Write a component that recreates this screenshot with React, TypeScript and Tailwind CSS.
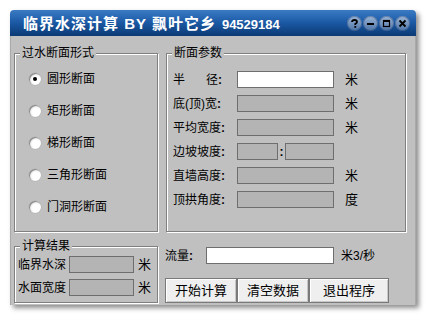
import React from 'react';

const etched = 'border border-[#808080] shadow-[1px_1px_0_#ffffff,inset_1px_1px_0_#ffffff]';
const field = 'h-[17px] border border-[#6e6e6e]';

function Legend({ text }: { text: string }) {
  return (
    <div className="-mt-[8px] ml-[5px] w-fit bg-[#c0c0c0] px-[2px] text-[12px] leading-[14px]">{text}</div>
  );
}

function Radio({ label, checked }: { label: string; checked?: boolean }) {
  return (
    <div className="flex h-[32px] items-center">
      <div className="ml-[14px] flex h-[12px] w-[12px] items-center justify-center rounded-full bg-[radial-gradient(circle_at_60%_60%,#ffffff_40%,#e4e4e4_62%,#9a9a9a_100%)] shadow-[inset_1px_1px_0_#8c8c8c,0_0_0_0.5px_#b0b0b0]">
        {checked && <div className="h-[4px] w-[4px] rounded-full bg-black" />}
      </div>
      <span className="ml-[6px] text-[12px] leading-none">{label}</span>
    </div>
  );
}

function ParamRow({ label, unit, white }: { label: React.ReactNode; unit?: string; white?: boolean }) {
  return (
    <div className="flex h-[17px] items-center">
      <div className="w-[64px] text-[12px] leading-none">{label}</div>
      <div className={`${field} w-[97px] ${white ? 'bg-white' : 'bg-[#b4b4b4]'}`} />
      {unit && <span className="ml-[11px] text-[13px] leading-none">{unit}</span>}
    </div>
  );
}

function TitleButton({ children }: { children: React.ReactNode }) {
  return (
    <div className="flex h-[15px] w-[15px] items-center justify-center rounded-full bg-gradient-to-b from-[#9cb6d6] to-[#4b73a6] shadow-[inset_0_0_0_1px_rgba(20,50,100,0.35)]">
      <svg width="9" height="9" viewBox="0 0 9 9">{children}</svg>
    </div>
  );
}

export default function App() {
  return (
    <div className="min-h-screen bg-white pl-[10px] pt-[10px] font-['Liberation_Sans','Noto_Sans_CJK_SC',sans-serif] text-black">
      <div className="w-[406px] rounded-t-[4px] shadow-[3px_3px_5px_rgba(0,0,0,0.45)]">
        {/* title bar */}
        <div className="flex h-[26px] items-center rounded-t-[4px] bg-gradient-to-b from-[#3a7bc4] via-[#1a58a3] to-[#0c3a74] pl-[13px] pr-[6px]">
          <div className="flex items-baseline text-[15px] font-bold leading-none tracking-[1px] text-white">
            <span>临界水深计算 BY 飘叶它乡</span>
            <span className="ml-[6px] text-[13px] tracking-normal">94529184</span>
          </div>
          <div className="ml-auto flex gap-[1px]">
            <TitleButton>
              <path d="M2 3 Q2 1 4.5 1 Q7 1 7 3 Q7 4.2 5.3 4.8 L5.3 6" fill="none" stroke="#000" strokeWidth="1.8" />
              <rect x="4.4" y="7" width="1.8" height="1.8" fill="#000" />
            </TitleButton>
            <TitleButton>
              <rect x="1" y="4" width="7" height="2" fill="#000" />
            </TitleButton>
            <TitleButton>
              <rect x="1.5" y="1.5" width="6" height="6" fill="none" stroke="#000" strokeWidth="1.2" />
              <rect x="1.5" y="1.5" width="6" height="1.5" fill="#000" />
            </TitleButton>
            <TitleButton>
              <path d="M1.5 1.5 L7.5 7.5 M7.5 1.5 L1.5 7.5" stroke="#000" strokeWidth="1.8" />
            </TitleButton>
          </div>
        </div>

        {/* body */}
        <div className="h-[269px] border-x border-[#a9a9a9] bg-[#c0c0c0] pl-[3px] pt-[17px]">
          <div className="flex gap-[8px]">
            <div className={`${etched} h-[179px] w-[144px]`}>
              <Legend text="过水断面形式" />
              <div className="pt-[3px]">
                <Radio label="圆形断面" checked />
                <Radio label="矩形断面" />
                <Radio label="梯形断面" />
                <Radio label="三角形断面" />
                <Radio label="门洞形断面" />
              </div>
            </div>

            <div className={`${etched} h-[179px] w-[240px]`}>
              <Legend text="断面参数" />
              <div className="flex flex-col gap-[7px] pl-[6px] pt-[11px]">
                <ParamRow
                  white
                  unit="米"
                  label={
                    <span className="flex">
                      <span className="flex w-[45px] justify-between">
                        <span>半</span>
                        <span>径</span>
                      </span>
                      <span className="font-bold">:</span>
                    </span>
                  }
                />
                <ParamRow unit="米" label={<>底(顶)宽<b>:</b></>} />
                <ParamRow unit="米" label={<>平均宽度<b>:</b></>} />
                <div className="flex h-[17px] items-center">
                  <div className="w-[64px] text-[12px] leading-none">
                    边坡坡度<b>:</b>
                  </div>
                  <div className={`${field} w-[41px] bg-[#b4b4b4]`} />
                  <span className="w-[7px] text-center text-[12px] font-bold leading-none">:</span>
                  <div className={`${field} w-[49px] bg-[#b4b4b4]`} />
                </div>
                <ParamRow unit="米" label={<>直墙高度<b>:</b></>} />
                <ParamRow unit="度" label={<>顶拱角度<b>:</b></>} />
              </div>
            </div>
          </div>

          <div className="mt-[14px] flex">
            <div className={`${etched} h-[57px] w-[144px]`}>
              <Legend text="计算结果" />
              <div className="flex flex-col gap-[6px] pl-[3px] pt-[3px]">
                <div className="flex h-[17px] items-center">
                  <span className="w-[51px] text-[12px] leading-none">临界水深</span>
                  <div className={`${field} w-[65px] bg-[#b4b4b4]`} />
                  <span className="ml-[4px] text-[13px] leading-none">米</span>
                </div>
                <div className="flex h-[17px] items-center">
                  <span className="w-[51px] text-[12px] leading-none">水面宽度</span>
                  <div className={`${field} w-[65px] bg-[#b4b4b4]`} />
                  <span className="ml-[4px] text-[13px] leading-none">米</span>
                </div>
              </div>
            </div>

            <div className="ml-[7px] flex flex-col pt-[1px]">
              <div className="flex h-[17px] items-center">
                <span className="w-[41px] text-[12px] leading-none">
                  流量<b>:</b>
                </span>
                <div className={`${field} w-[128px] bg-white`} />
                <span className="ml-[7px] text-[12px] leading-none">米3/秒</span>
              </div>
              <div className="mt-[14px] flex">
                {[
                  ['开始计算', 'w-[72px]'],
                  ['清空数据', 'w-[72px]'],
                  ['退出程序', 'w-[80px]'],
                ].map(([t, w]) => (
                  <div
                    key={t}
                    className={`${w} flex h-[25px] items-center justify-center border border-[#7a7a7a] bg-[#efefef] text-[13px] leading-none shadow-[inset_1px_1px_0_#ffffff,inset_-1px_-1px_0_#c8c8c8]`}
                  >
                    {t}
                  </div>
                ))}
              </div>
            </div>
          </div>
        </div>
      </div>
    </div>
  );
}
